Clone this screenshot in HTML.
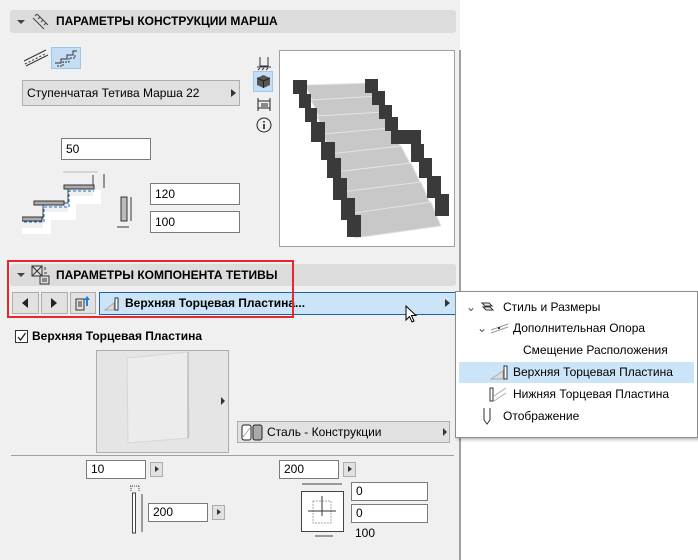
<!DOCTYPE html>
<html><head><meta charset="utf-8"><style>
*{box-sizing:border-box;margin:0;padding:0}
body{width:698px;height:560px;overflow:hidden;background:#fff;font-family:"Liberation Sans",sans-serif;font-size:12px;color:#000;position:relative}
.a{position:absolute}
.panel{left:0;top:0;width:460px;height:560px;background:#f0f0f0}
.hdr{background:#dcdcdc;border-radius:3px;font-weight:bold;font-size:12px;line-height:22px}
.inp{background:#fff;border:1px solid #7a7a7a;height:22px;line-height:20px;padding-left:4px;font-size:12px}
.btn{background:#e1e1e1;border:1px solid #adadad}
.tri{width:0;height:0;border-top:4px solid transparent;border-bottom:4px solid transparent;border-left:5px solid #333}
.mi{font-size:12px;line-height:21px}
</style></head><body>
<div class="a panel"></div>
<div class="a" style="left:459px;top:50px;width:2px;height:510px;background:#a0a0a0"></div>

<!-- header 1 -->
<div class="a hdr" style="left:10px;top:10px;width:446px;height:23px"></div>
<div class="a" style="left:17px;top:20px;border-left:4px solid transparent;border-right:4px solid transparent;border-top:4px solid #444"></div>
<svg class="a" style="left:32px;top:12px" width="18" height="18"><g stroke="#444" fill="none"><path d="M1 6 L12 17 M5 2 L16 13"/><path d="M3 4 l2 -2 M6 7 l2 -2 M9 10 l2 -2 M12 13 l2 -2" /></g></svg>
<div class="a" style="left:56px;top:10px;font-weight:bold;line-height:23px">ПАРАМЕТРЫ КОНСТРУКЦИИ МАРША</div>

<!-- type icons -->
<svg class="a" style="left:22px;top:48px" width="28" height="20"><g stroke="#333" fill="none"><path d="M2 13 L24 2 M4 18 L26 7"/><path d="M3 16 l20 -10" stroke-dasharray="2 2"/></g></svg>
<div class="a" style="left:51px;top:47px;width:30px;height:22px;background:#c6def4;border:1px solid #9cc6ea"></div>
<svg class="a" style="left:53px;top:49px" width="26" height="18"><g stroke="#333" fill="none"><path d="M2 14 h6 v-4 h6 v-4 h6 v-4 h4"/><path d="M4 17 h6 v-4 h6 v-4 h6 v-4" stroke-dasharray="2 1"/></g></svg>

<div class="a btn" style="left:22px;top:80px;width:218px;height:26px;line-height:24px;padding-left:4px">Ступенчатая Тетива Марша 22</div>
<div class="a tri" style="left:231px;top:89px"></div>

<!-- side icons -->
<svg class="a" style="left:256px;top:55px" width="16" height="16"><g stroke="#333" fill="none"><path d="M4 2 v9 h8 v-9 M1 12 h14"/><path d="M2 15 l2 -2 M6 15 l2 -2 M10 15 l2 -2"/></g></svg>
<div class="a" style="left:253px;top:71px;width:20px;height:21px;background:#c6def4;border:1px solid #9cc6ea"></div>
<svg class="a" style="left:256px;top:74px" width="15" height="15"><path d="M7.5 1 L14 4 V11 L7.5 14 L1 11 V4Z" fill="#555"/><path d="M1 4 L7.5 7 L14 4 M7.5 7 V14" stroke="#222" fill="none"/></svg>
<svg class="a" style="left:256px;top:97px" width="16" height="15"><g stroke="#222" fill="none"><path d="M2 1 v13 M14 1 v13 M2 4 h12 M2 11 h12 M5 7 h7 M5 9 h7"/></g></svg>
<svg class="a" style="left:256px;top:117px" width="16" height="16"><circle cx="8" cy="8" r="7" stroke="#222" fill="none"/><path d="M8 7 v5 M8 4 v1.5" stroke="#222" stroke-width="1.6"/></svg>

<!-- preview -->
<div class="a" style="left:279px;top:50px;width:176px;height:197px;background:#fff;border:1px solid #a0a0a0"></div>
<svg class="a" style="left:279px;top:50px" width="176" height="197">
<g fill="#c8c8c8" stroke="#e4e4e4">
<polygon points="26,35 93,33 100,48 34,52"/>
<polygon points="32,50 100,46 106,63 40,67"/>
<polygon points="38,66 106,62 112,80 46,85"/>
<polygon points="44,84 112,78 122,98 52,105"/>
<polygon points="50,104 122,96 132,115 58,124"/>
<polygon points="56,122 132,113 142,134 64,145"/>
<polygon points="62,142 142,132 152,155 70,167"/>
<polygon points="68,164 152,152 162,176 76,188"/>
</g>
<g fill="#3a3a3a">
<rect x="14" y="30" width="14" height="14"/><rect x="20" y="44" width="12" height="14"/><rect x="26" y="58" width="12" height="14"/><rect x="32" y="72" width="14" height="20"/><rect x="42" y="92" width="14" height="18"/><rect x="48" y="108" width="14" height="20"/><rect x="54" y="128" width="14" height="22"/><rect x="62" y="148" width="14" height="22"/><rect x="68" y="165" width="14" height="22"/>
<rect x="86" y="29" width="13" height="14"/><rect x="93" y="41" width="13" height="14"/><rect x="100" y="55" width="13" height="14"/><rect x="106" y="67" width="13" height="14"/><rect x="112" y="80" width="30" height="14"/><rect x="132" y="94" width="13" height="18"/><rect x="140" y="108" width="13" height="20"/><rect x="148" y="126" width="14" height="22"/><rect x="156" y="144" width="14" height="22"/>
</g>
</svg>

<!-- inputs -->
<div class="a inp" style="left:61px;top:138px;width:90px">50</div>
<svg class="a" style="left:22px;top:170px" width="90" height="64"><g fill="none"><path d="M0 62 h25 v-16 h25 v-16 h25 v-10" stroke="#fff" stroke-width="8"/><path d="M41 2 h35" stroke="#bbb"/><path d="M1 48 h20 v-15 h25 v-16 h25 v-12" stroke="#444"/><path d="M2 52 h20 v-15 h25 v-16 h25" stroke="#1a6fd8" stroke-dasharray="3 2"/><rect x="42" y="15" width="30" height="4" fill="#aaa" stroke="#333"/><rect x="12" y="31" width="30" height="4" fill="#aaa" stroke="#333"/><rect x="0" y="47" width="20" height="4" fill="#aaa" stroke="#333"/><path d="M82 4 v14" stroke="#333"/></g></svg>
<svg class="a" style="left:115px;top:195px" width="20" height="38"><rect x="6" y="2" width="6" height="24" fill="#bbb" stroke="#333"/><path d="M16 2 v24 M2 32 h12" stroke="#333"/></svg>
<div class="a inp" style="left:150px;top:183px;width:90px">120</div>
<div class="a inp" style="left:150px;top:211px;width:90px">100</div>

<!-- header 2 -->
<div class="a hdr" style="left:10px;top:264px;width:446px;height:22px"></div>
<div class="a" style="left:17px;top:273px;border-left:4px solid transparent;border-right:4px solid transparent;border-top:4px solid #444"></div>
<svg class="a" style="left:31px;top:265px" width="20" height="20"><g stroke="#333" fill="none"><rect x="1" y="1" width="10" height="10"/><path d="M1 1 l10 10 M11 1 l-10 10"/><rect x="9" y="11" width="9" height="8"/><path d="M11 14 h5 M11 16 h5 M14 2 v3 M13 8 h3"/></g></svg>
<div class="a" style="left:56px;top:264px;font-weight:bold;line-height:22px">ПАРАМЕТРЫ КОМПОНЕНТА ТЕТИВЫ</div>

<!-- nav -->
<div class="a btn" style="left:12px;top:292px;width:27px;height:22px"></div>
<div class="a" style="left:22px;top:298px;border-top:5px solid transparent;border-bottom:5px solid transparent;border-right:6px solid #222"></div>
<div class="a btn" style="left:41px;top:292px;width:27px;height:22px"></div>
<div class="a" style="left:51px;top:298px;border-top:5px solid transparent;border-bottom:5px solid transparent;border-left:6px solid #222"></div>
<div class="a btn" style="left:70px;top:292px;width:26px;height:22px"></div>
<svg class="a" style="left:74px;top:294px" width="18" height="18"><g fill="none" stroke="#333"><path d="M2 5 h8 v11 h-8z M4 8 h4 M4 10 h4 M4 12 h4"/></g><path d="M12 12 v-6 h-2 l3 -4 l3 4 h-2 v6z" fill="#1a7fe0"/></svg>
<div class="a" style="left:99px;top:292px;width:357px;height:23px;background:#cce4f7;border:1px solid #1f5fa8"></div>
<svg class="a" style="left:104px;top:296px" width="16" height="16"><path d="M1 14 L10 7 V14Z" fill="#ddd" stroke="#aaa"/><rect x="11" y="2" width="3" height="12" fill="#fff" stroke="#333"/></svg>
<div class="a" style="left:125px;top:292px;line-height:23px;font-weight:bold">Верхняя Торцевая Пластина...</div>
<div class="a tri" style="left:445px;top:299px"></div>
<div class="a" style="left:7px;top:260px;width:287px;height:58px;border:2px solid #e8272c"></div>
<!-- cursor -->
<svg class="a" style="left:405px;top:305px" width="14" height="20"><path d="M1 1 V15 L4.5 11.5 L7 17 L9 16 L6.5 10.5 H11Z" fill="#fff" stroke="#000"/></svg>

<!-- checkbox -->
<div class="a" style="left:15px;top:330px;width:13px;height:13px;background:#fff;border:1px solid #333"></div>
<svg class="a" style="left:16px;top:331px" width="11" height="11"><path d="M2 6 l2.5 3 l5 -7" stroke="#222" fill="none" stroke-width="1.3"/></svg>
<div class="a" style="left:32px;top:328px;font-weight:bold;line-height:16px">Верхняя Торцевая Пластина</div>

<div class="a" style="left:96px;top:350px;width:133px;height:103px;background:#e5e5e5;border:1px solid #adadad"></div>
<svg class="a" style="left:96px;top:350px" width="133" height="103"><polygon points="31,8 92,2 93,88 32,93" fill="#ececec" stroke="#d6d6d6"/><path d="M92 2 V88" stroke="#aaa"/></svg>
<div class="a tri" style="left:221px;top:337px;display:none"></div>
<div class="a" style="left:221px;top:397px;border-top:4px solid transparent;border-bottom:4px solid transparent;border-left:4px solid #333"></div>

<div class="a btn" style="left:237px;top:421px;width:213px;height:22px"></div>
<svg class="a" style="left:241px;top:424px" width="24" height="17"><rect x="1" y="1" width="9" height="15" rx="2" fill="#fff" stroke="#222"/><path d="M2 13 L9 4" stroke="#8ab"/><rect x="12" y="1" width="9" height="15" rx="2" fill="#aaa" stroke="#222"/></svg>
<div class="a" style="left:267px;top:421px;line-height:22px">Сталь - Конструкции</div>
<div class="a" style="left:443px;top:428px;border-top:4px solid transparent;border-bottom:4px solid transparent;border-left:4px solid #333"></div>

<div class="a" style="left:11px;top:455px;width:443px;height:1px;background:#a0a0a0"></div>

<div class="a inp" style="left:86px;top:460px;width:60px;height:19px;line-height:17px">10</div>
<div class="a btn" style="left:150px;top:462px;width:13px;height:15px"></div>
<div class="a" style="left:155px;top:466px;border-top:3px solid transparent;border-bottom:3px solid transparent;border-left:4px solid #333"></div>
<svg class="a" style="left:128px;top:482px" width="20" height="52"><path d="M2 4 h10 M3 4 v6 M11 4 v6" stroke="#444" stroke-dasharray="1 1" fill="none"/><rect x="4.5" y="11" width="3" height="40" fill="#fff" stroke="#444"/><path d="M14 12 v38" stroke="#444"/></svg>
<div class="a inp" style="left:148px;top:503px;width:60px;height:19px;line-height:17px">200</div>
<div class="a btn" style="left:212px;top:505px;width:13px;height:15px"></div>
<div class="a" style="left:217px;top:509px;border-top:3px solid transparent;border-bottom:3px solid transparent;border-left:4px solid #333"></div>

<div class="a inp" style="left:279px;top:460px;width:60px;height:19px;line-height:17px">200</div>
<div class="a btn" style="left:343px;top:462px;width:13px;height:15px"></div>
<div class="a" style="left:348px;top:466px;border-top:3px solid transparent;border-bottom:3px solid transparent;border-left:4px solid #333"></div>
<svg class="a" style="left:300px;top:480px" width="50" height="60"><path d="M2 4 h40" stroke="#444"/><rect x="1.5" y="11.5" width="42" height="40" fill="#fff" stroke="#444"/><rect x="13" y="21" width="18" height="22" fill="none" stroke="#aaa" stroke-dasharray="2 1"/><path d="M22 16 v20 M8 31 h28" stroke="#333"/><path d="M15 56 h18" stroke="#444"/></svg>
<div class="a inp" style="left:351px;top:482px;width:77px;height:19px;line-height:17px">0</div>
<div class="a inp" style="left:351px;top:504px;width:77px;height:19px;line-height:17px">0</div>
<div class="a" style="left:355px;top:526px;font-size:12px">100</div>

<!-- popup -->
<div class="a" style="left:455px;top:291px;width:243px;height:147px;background:#fff;border:1px solid #8c8c8c;box-shadow:2px 2px 3px rgba(0,0,0,.25)"></div>
<div class="a" style="left:459px;top:362px;width:235px;height:21px;background:#cce4f7"></div>
<div class="a mi" style="left:466px;top:297px;color:#555">⌄</div>
<svg class="a" style="left:481px;top:301px" width="16" height="12"><path d="M1 2 h7 l3 3 h-7z M2 6 h7 l3 3 h-7z" stroke="#333" fill="#eee"/></svg>
<div class="a mi" style="left:503px;top:297px">Стиль и Размеры</div>
<div class="a mi" style="left:477px;top:318px;color:#555">⌄</div>
<svg class="a" style="left:490px;top:322px" width="20" height="12"><path d="M1 8 L18 2 M1 11 L18 5" stroke="#999"/><rect x="8" y="5" width="2" height="2" fill="#333"/></svg>
<div class="a mi" style="left:513px;top:318px">Дополнительная Опора</div>
<div class="a mi" style="left:523px;top:340px">Смещение Расположения</div>
<svg class="a" style="left:490px;top:364px" width="20" height="17"><path d="M1 15 L13 7 V15Z" fill="#ddd" stroke="#aaa"/><rect x="14" y="2" width="3" height="13" fill="#fff" stroke="#333"/></svg>
<div class="a mi" style="left:513px;top:362px">Верхняя Торцевая Пластина</div>
<svg class="a" style="left:488px;top:386px" width="20" height="17"><rect x="2" y="2" width="3" height="13" fill="#fff" stroke="#333"/><path d="M6 10 L18 2 M6 15 L18 7" stroke="#aaa"/></svg>
<div class="a mi" style="left:513px;top:384px">Нижняя Торцевая Пластина</div>
<svg class="a" style="left:482px;top:407px" width="10" height="20"><path d="M2 1 v12 l3 4 l3 -4 v-12" stroke="#333" fill="none"/></svg>
<div class="a mi" style="left:503px;top:406px">Отображение</div>
</body></html>
